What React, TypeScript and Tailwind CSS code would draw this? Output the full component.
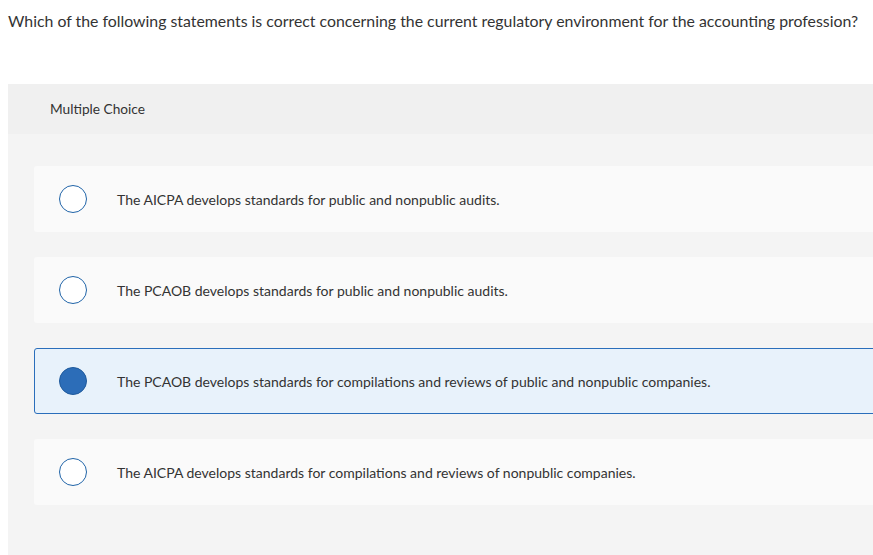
import React from 'react';

const options = [
    'The AICPA develops standards for public and nonpublic audits.',
    'The PCAOB develops standards for public and nonpublic audits.',
    'The PCAOB develops standards for compilations and reviews of public and nonpublic companies.',
    'The AICPA develops standards for compilations and reviews of nonpublic companies.',
];

const selected = 2;

export default function App() {
    return (
        <div className="min-h-screen overflow-hidden bg-white text-[#333] font-['Lato','Liberation_Sans',sans-serif]">
            <div className="pl-2 pt-[11px] text-[15.85px] leading-5">
                Which of the following statements is correct concerning the current regulatory environment for the accounting profession?
            </div>
            <div className="mt-[53px] ml-2 -mr-4 bg-[#f4f4f4]">
                <div className="h-[50px] bg-[#f0f0f0] pl-[42px] flex items-center text-[13.7px] pt-px">
                    Multiple Choice
                </div>
                <div className="pt-8 pb-[50px] pl-[26px] flex flex-col gap-[25px]">
                    {options.map((text, i) => {
                        const isSel = i === selected;
                        return (
                            <div
                                key={i}
                                className={
                                    isSel
                                        ? 'h-[66px] flex items-center rounded-[3px] border border-[#2a6ebb] bg-[#e8f2fb] pl-6'
                                        : 'h-[66px] flex items-center rounded-[3px] border border-transparent bg-[#fafafa] pl-6'
                                }
                            >
                                <span
                                    className={
                                        isSel
                                            ? 'w-7 h-7 rounded-full border-[1.5px] border-[#1f5a9c] bg-[#2c6db8] shrink-0'
                                            : 'w-7 h-7 rounded-full border-[1.5px] border-[#2064a8] bg-white shrink-0'
                                    }
                                />
                                <span className="ml-[30px] text-[14px]">{text}</span>
                            </div>
                        );
                    })}
                </div>
            </div>
        </div>
    );
}
